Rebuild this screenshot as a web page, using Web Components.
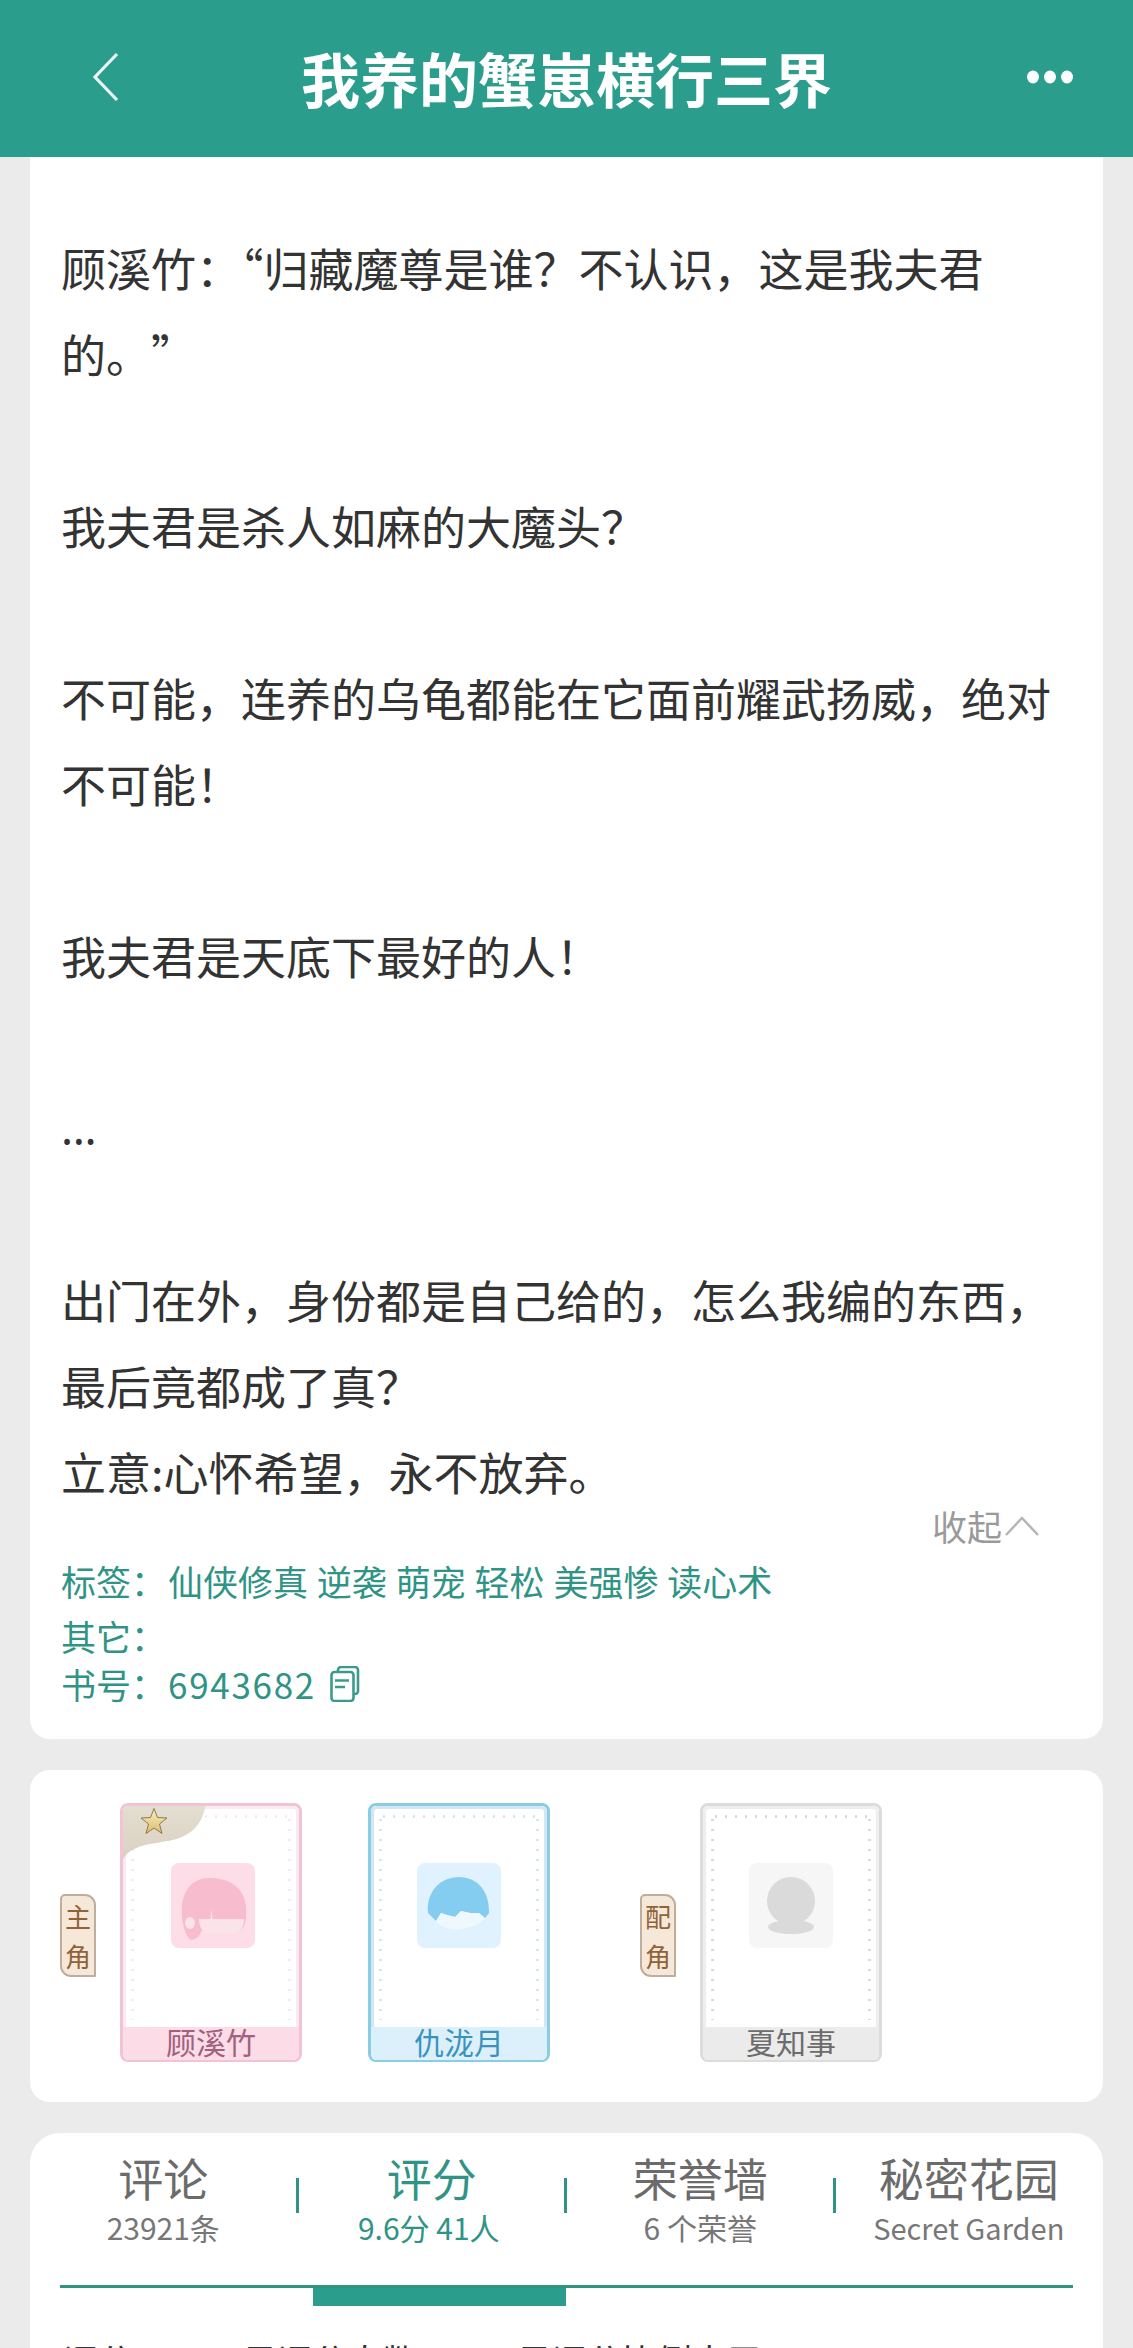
<!DOCTYPE html>
<html lang="zh-CN">
<head>
<meta charset="utf-8">
<title>我养的蟹崽横行三界</title>
<style>
  html, body { margin: 0; padding: 0; }
  body {
    width: 1133px; height: 2348px; overflow: hidden;
    background: #ebebeb;
    font-family: "Noto Sans CJK SC", "Noto Sans", sans-serif;
  }
</style>
</head>
<body>
  <app-header>我养的蟹崽横行三界</app-header>
  <intro-card></intro-card>
  <role-row></role-row>
  <tab-panel></tab-panel>

<script>
// 顶部标题栏
class AppHeader extends HTMLElement {
  constructor() {
    super();
    this.attachShadow({ mode: 'open' });
    this.shadowRoot.innerHTML = `
      <style>
        :host { display: grid; grid-template-columns: 1fr auto 1fr; align-items: center; height: 157px; background: #2a9d8c; color: #fff; padding-bottom: 3px; box-sizing: border-box; }
        .back { padding-left: 90px; display: flex; }
        .title { font-size: 59px; font-weight: 700; line-height: 1; }
        .more { padding-right: 59px; display: flex; justify-content: flex-end; }
      </style>
      <div class="back">
        <svg width="30" height="50" viewBox="0 0 30 50"><path d="M27 2 L5 25 L27 48" fill="none" stroke="#eaf7f5" stroke-width="3.2"/></svg>
      </div>
      <div class="title"><slot></slot></div>
      <div class="more">
        <svg width="48" height="20" viewBox="0 0 48 20" fill="#fff"><ellipse cx="7" cy="10" rx="6" ry="6.5"/><ellipse cx="24" cy="10" rx="6" ry="6.5"/><ellipse cx="41" cy="10" rx="6" ry="6.5"/></svg>
      </div>`;
  }
}
customElements.define('app-header', AppHeader);

// 简介卡片
class IntroCard extends HTMLElement {
  constructor() {
    super();
    this.attachShadow({ mode: 'open' });
    this.shadowRoot.innerHTML = `
      <style>
        :host { display: block; margin: 0 30px; background: #fff; border-radius: 0 0 20px 20px; padding: 68px 31px 0; height: 1582px; box-sizing: border-box; }
        .text { font-size: 45px; line-height: 86px; color: #333; width: 1000px; }
        .blank { height: 86px; }
        .full { text-spacing-trim: space-all; }
        .dots { font-family: "Noto Sans", sans-serif; }
        .fold { display: flex; justify-content: flex-end; align-items: center; gap: 3px; font-size: 35px; line-height: 50px; color: #9a9a9a; margin-top: -14px; padding-right: 33px; }
        .meta { color: #2f9485; font-size: 35px; margin-top: 5px; word-spacing: 1px; }
        .meta div { height: 50px; line-height: 50px; }
        .meta b { font-weight: 400; margin-right: 2px; }
        .meta .l2 { margin-top: 5px; }
        .meta .l3 { margin-top: -2px; display: flex; align-items: center; }
        .meta .num { letter-spacing: 1.7px; }
        .meta svg { margin-left: 14px; }
      </style>
      <div class="text">
        <div>顾溪竹：“归藏魔尊是谁？不认识，这是我夫君</div>
        <div class="full">的。”</div>
        <div class="blank"></div>
        <div>我夫君是杀人如麻的大魔头？</div>
        <div class="blank"></div>
        <div>不可能，连养的乌龟都能在它面前耀武扬威，绝对</div>
        <div>不可能！</div>
        <div class="blank"></div>
        <div>我夫君是天底下最好的人！</div>
        <div class="blank"></div>
        <div class="dots">…</div>
        <div class="blank"></div>
        <div>出门在外，身份都是自己给的，怎么我编的东西，</div>
        <div>最后竟都成了真？</div>
        <div>立意:心怀希望，永不放弃。</div>
      </div>
      <div class="fold">收起<svg width="34" height="20" viewBox="0 0 34 20"><path d="M1 19 L17 2 L33 19" fill="none" stroke="#b5b5b5" stroke-width="2.5"/></svg></div>
      <div class="meta">
        <div><b>标签：</b>仙侠修真 逆袭 萌宠 轻松 美强惨 读心术</div>
        <div class="l2">其它：</div>
        <div class="l3"><b>书号：</b><span class="num">6943682</span><svg width="30" height="36" viewBox="0 0 30 36" fill="none" stroke="#3a9a8c" stroke-width="2.6"><path d="M8 6 V4 a3 3 0 0 1 3-3 H25 a3 3 0 0 1 3 3 V25 a3 3 0 0 1 -3 3 H24"/><rect x="1.5" y="6" width="22" height="29" rx="3"/><path d="M5 14.5 H19 M5 21 H15"/></svg></div>
      </div>`;
  }
}
customElements.define('intro-card', IntroCard);

// 角色卡片
class RoleCard extends HTMLElement {
  connectedCallback() {
    const theme = this.getAttribute('theme') || 'gray';
    const name = this.getAttribute('name') || '';
    const star = this.hasAttribute('star');
    const face = {
      pink: `<path d="M39 15 C18 15 10 32 11 50 C11 62 15 74 20 77 C26 76 30 72 30 68 H68 C74 66 76 56 75 44 C74 26 60 15 39 15Z" fill="#f7bccd"/><path d="M28 56 H39.5 L40.5 46 L41.5 56 H73 C73 66 68 70 60 71 H38 C32 71 28 64 28 56Z" fill="#fbe3ea"/><ellipse cx="19" cy="60" rx="5" ry="6" fill="#fbe3ea"/>`,
      blue: `<path d="M11 50 C9 28 24 14 42 14 C60 14 73 28 72 50 L68 55 L62 50 L53 50 L44 48 L38 54 L30 52 L24 50 L19 58Z" fill="#85cdf0"/><path d="M19 58 L24 50 L30 52 L38 54 L44 48 L53 50 L62 50 L68 55 C60 66 30 72 19 58Z" fill="#eef8fd"/>`,
      gray: `<circle cx="42" cy="38" r="24" fill="#dadada"/><ellipse cx="42" cy="64" rx="23" ry="7" fill="#dadada"/>`
    }[theme];
    this.attachShadow({ mode: 'open' });
    this.shadowRoot.innerHTML = `
      <style>
        :host { display: block; width: 182px; height: 259px; position: relative; box-sizing: border-box; border-radius: 8px; background: #fff; overflow: hidden;
                border: 3px solid var(--edge); border-bottom-width: 2px; }
        :host([theme=pink]) { --edge: #f2c4d3; --soft: #fbeaf0; --bar: #fcdce7; --ink: #a1617e; --tile: #fddde8; --dot: #f7e6ec; --shift: 3px; }
        :host([theme=blue]) { --edge: #8acce2; --soft: #cfe8f4; --bar: #dcf0fc; --ink: #3b93bd; --tile: #e0f2fd; --dot: #cfe3ec; --shift: 0px; }
        :host([theme=gray]) { --edge: #dcdcdc; --soft: #eeeeee; --bar: #ebebeb; --ink: #6c6c6c; --tile: #f6f6f6; --dot: #d4d4d4; --shift: 0px; }
        .wrap { height: 100%; display: flex; flex-direction: column; }
        .paper { flex: 1; border: 3px solid var(--soft); border-bottom: 0; border-radius: 6px 6px 0 0; display: flex; justify-content: center; padding-top: 54px; box-sizing: border-box; }
        .inner { position: absolute; left: 8px; right: 8px; top: 9px; bottom: 40px;
          background:
            radial-gradient(circle, var(--dot) 1px, transparent 1.5px) left top / 3px 10px repeat-y,
            radial-gradient(circle, var(--dot) 1px, transparent 1.5px) right top / 3px 10px repeat-y,
            radial-gradient(circle, var(--dot) 1px, transparent 1.5px) left top / 10px 3px repeat-x; }
        .tile { width: 84px; height: 85px; border-radius: 8px; background: var(--tile); margin-left: var(--shift); position: relative; }
        .name { height: 33px; background: var(--bar); color: var(--ink); font-size: 30px; line-height: 29px; text-align: center; }
        .corner { position: absolute; left: -3px; top: -3px; }
      </style>
      <div class="wrap">
        <div class="paper"><svg class="tile" viewBox="0 0 84 85">${face}</svg></div>
        <div class="name">${name}</div>
      </div>
      <div class="inner"></div>
      ${star ? `<svg class="corner" width="90" height="62" viewBox="0 0 90 62">
        <defs><linearGradient id="s" x1="0" y1="0" x2="0" y2="1"><stop offset="0" stop-color="#f8eec0"/><stop offset="1" stop-color="#dcbc70"/></linearGradient>
        <linearGradient id="c" x1="0" y1="0" x2="0" y2="1"><stop offset="0" stop-color="#e4dfd2"/><stop offset="1" stop-color="#d9d0bf"/></linearGradient></defs>
        <path d="M0 0 H86 C84 14 78 27 62 34 C48 40 28 39 14 46 C8 49 4 53 2 59 L0 60Z" fill="url(#c)"/>
        <path d="M34 5.5 L37.5 14.5 L47 15 L39.5 21 L42 30.5 L34 25 L26 30.5 L28.5 21 L21 15 L30.5 14.5Z" fill="url(#s)" stroke="#8f7a4c" stroke-width="1"/>
      </svg>` : ''}`;
  }
}
customElements.define('role-card', RoleCard);

// 主角 / 配角 小竖标
class RoleTag extends HTMLElement {
  constructor() {
    super();
    this.attachShadow({ mode: 'open' });
    this.shadowRoot.innerHTML = `
      <style>
        :host { display: block; width: 36px; height: 83px; box-sizing: border-box; background: #f6e8d8; border: 2px solid #bfae9c; border-radius: 5px 11px 1px 11px; color: #8f6238; font-size: 26px; line-height: 40px; text-align: center; }
      </style>
      <slot></slot>`;
  }
}
customElements.define('role-tag', RoleTag);

// 角色一行
class RoleRow extends HTMLElement {
  constructor() {
    super();
    this.attachShadow({ mode: 'open' });
    this.shadowRoot.innerHTML = `
      <style>
        :host { display: flex; align-items: flex-start; margin: 31px 30px 0; height: 332px; box-sizing: border-box; background: #fff; border-radius: 20px; padding: 33px 0 0 30px; }
        role-tag { margin-top: 91px; }
        .c1 { margin-left: 24px; }
        .c2 { margin-left: 66px; }
        .t2 { margin-left: 90px; }
      </style>
      <role-tag>主<br>角</role-tag>
      <role-card class="c1" theme="pink" name="顾溪竹" star></role-card>
      <role-card class="c2" theme="blue" name="仇泷月"></role-card>
      <role-tag class="t2">配<br>角</role-tag>
      <role-card class="c1" theme="gray" name="夏知事"></role-card>`;
  }
}
customElements.define('role-row', RoleRow);

// 底部标签页
class TabPanel extends HTMLElement {
  constructor() {
    super();
    this.attachShadow({ mode: 'open' });
    const tabs = [['评论', '23921条'], ['评分', '9.6分 41人', true], ['荣誉墙', '6 个荣誉'], ['秘密花园', 'Secret Garden']];
    this.shadowRoot.innerHTML = `
      <style>
        :host { display: block; margin: 31px 30px 0; height: 300px; background: #fff; border-radius: 30px 30px 0 0; box-sizing: border-box; padding-top: 15px; overflow: hidden; }
        .tabs { display: grid; grid-template-columns: repeat(4, 1fr); height: 137px; margin-left: -1px; }
        .tab { position: relative; text-align: center; color: #6b6b6b; }
        .tab + .tab::before { content: ""; position: absolute; left: -2px; top: 30px; width: 3px; height: 35px; background: #2f9485; }
        .tab.on { color: #2f9485; }
        .t { font-size: 45px; line-height: 59px; }
        .s { font-size: 30px; line-height: 40px; color: #777; }
        .tab.on .s { color: #2f9485; margin-right: 6px; }
        .tab:last-child .s { font-size: 29px; }
        .bar { height: 3px; margin: 0 30px; background: #2f9485; position: relative; }
        .bar i { position: absolute; left: 253px; top: 3px; width: 253px; height: 18px; background: #2a9d8c; }
        .info { margin: 48px 0 0 33px; font-size: 35px; line-height: 48px; color: #333; white-space: nowrap; word-spacing: 5px; }
      </style>
      <div class="tabs">
        ${tabs.map(t => `<div class="tab ${t[2] ? 'on' : ''}"><div class="t">${t[0]}</div><div class="s">${t[1]}</div></div>`).join('')}
      </div>
      <div class="bar"><i></i></div>
      <div class="info">评分： 9.6 星评分人数： 41 星评分比例大于 10%</div>`;
  }
}
customElements.define('tab-panel', TabPanel);
</script>
</body>
</html>
